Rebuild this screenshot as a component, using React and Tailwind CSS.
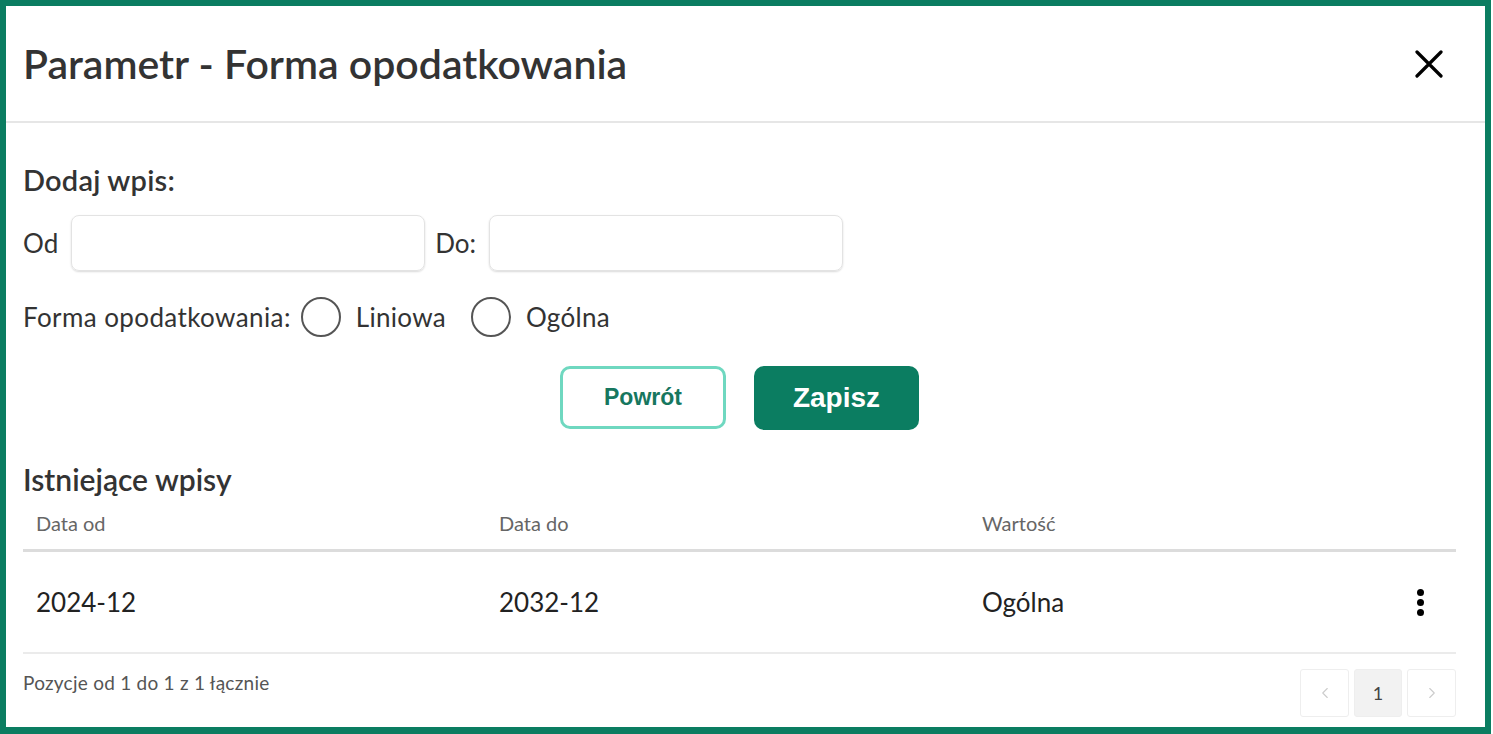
import React, { useState } from "react";
import { ChevronLeft, ChevronRight } from "lucide-react";

const rows = [{ from: "2024-12", to: "2032-12", value: "Ogólna" }];

function Radio({ label, checked, onChange }) {
  return (
    <label className="flex items-center cursor-pointer" onClick={onChange}>
      <span className="w-[40px] h-[40px] rounded-full border-2 border-[#555] flex items-center justify-center">
        {checked && <span className="w-[20px] h-[20px] rounded-full bg-[#0b7d61]" />}
      </span>
      <span className="ml-[15px] text-[26px] text-[#333] tracking-[0.3px]">{label}</span>
    </label>
  );
}

export default function App() {
  const [forma, setForma] = useState(null);

  return (
    <div
      className="w-[1491px] h-[734px] border-[6px] border-b-[7px] border-[#0b7d61] bg-white flex flex-col"
      style={{ fontFamily: "Lato, 'Noto Sans', sans-serif" }}
    >
      {/* Header */}
      <div className="h-[117px] shrink-0 flex items-center justify-between pl-[17px] pr-[42px] border-b-2 border-[#e6e6e6]">
        <h1 className="text-[41px] font-semibold text-[#333] leading-[48px]">
          Parametr - Forma opodatkowania
        </h1>
        <button className="text-black">
          <svg width="28" height="28" viewBox="0 0 28 28" fill="none" stroke="currentColor" strokeWidth="3.2" strokeLinecap="round">
            <path d="M2 2 L26 26 M26 2 L2 26" />
          </svg>
        </button>
      </div>

      {/* Body */}
      <div className="flex-1 flex flex-col pl-[17px] pr-[29px]">
        <h2 className="mt-[40px] text-[29px] font-semibold text-[#333] leading-[34px] tracking-[0.2px]">Dodaj wpis:</h2>

        <div className="mt-[18px] flex items-center">
          <span className="text-[26px] text-[#333] mr-[13px]">Od</span>
          <input className="w-[354px] h-[56px] rounded-[8px] border border-[#e3e3e3] shadow-[0_1px_2px_rgba(0,0,0,0.15)] px-3 outline-none" />
          <span className="text-[26px] text-[#333] ml-[10px] mr-[13px]">Do:</span>
          <input className="w-[354px] h-[56px] rounded-[8px] border border-[#e3e3e3] shadow-[0_1px_2px_rgba(0,0,0,0.15)] px-3 outline-none" />
        </div>

        <div className="mt-[26px] flex items-center">
          <span className="text-[26px] text-[#333] mr-[10px] tracking-[0.4px]">Forma opodatkowania:</span>
          <Radio label="Liniowa" checked={forma === "L"} onChange={() => setForma("L")} />
          <div className="w-[25px]" />
          <Radio label="Ogólna" checked={forma === "O"} onChange={() => setForma("O")} />
        </div>

        <div
          className="mt-[29px] flex justify-center gap-[28px]"
          style={{ fontFamily: "'Liberation Sans', Arial, sans-serif" }}
        >
          <button className="w-[166px] h-[63px] rounded-[10px] border-[3px] border-[#6fd8c0] text-[#17775f] text-[23px] font-bold">
            Powrót
          </button>
          <button className="w-[165px] h-[64px] rounded-[10px] bg-[#0b7d61] text-white text-[28px] font-bold">
            Zapisz
          </button>
        </div>

        <h2 className="mt-[31px] text-[30px] font-semibold text-[#333] leading-[36px]">Istniejące wpisy</h2>

        {/* Table */}
        <div className="mt-[2px]">
          <div className="flex items-center h-[53px] pb-[3px] border-b-[3px] border-[#dcdcdc] text-[20px] text-[#666]">
            <div className="w-[476px] pl-[13px]">Data od</div>
            <div className="w-[483px]">Data do</div>
            <div className="flex-1">Wartość</div>
          </div>
          {rows.map((r) => (
            <div
              key={r.from}
              className="flex items-center h-[102px] border-b-2 border-[#ebebeb] text-[26px] text-[#222]"
            >
              <div className="w-[476px] pl-[13px]">{r.from}</div>
              <div className="w-[483px]">{r.to}</div>
              <div className="flex-1">{r.value}</div>
              <button className="w-[10px] mr-[31px] flex flex-col items-center gap-[3px]">
                <span className="w-[7px] h-[7px] rounded-full bg-black" />
                <span className="w-[7px] h-[7px] rounded-full bg-black" />
                <span className="w-[7px] h-[7px] rounded-full bg-black" />
              </button>
            </div>
          ))}
        </div>

        <div className="flex justify-between items-start mt-[15px]">
          <span className="text-[19px] text-[#555] tracking-[0.25px]">Pozycje od 1 do 1 z 1 łącznie</span>
          <div className="flex gap-[5px]">
            <button className="w-[49px] h-[48px] border border-[#eeeeee] rounded-[3px] flex items-center justify-center text-[#cccccc]">
              <ChevronLeft className="w-[18px] h-[18px]" strokeWidth={1.5} />
            </button>
            <button className="w-[48px] h-[48px] border border-[#eeeeee] bg-[#f2f2f2] rounded-[3px] flex items-center justify-center text-[18px] text-[#444]">
              1
            </button>
            <button className="w-[49px] h-[48px] border border-[#eeeeee] rounded-[3px] flex items-center justify-center text-[#cccccc]">
              <ChevronRight className="w-[18px] h-[18px]" strokeWidth={1.5} />
            </button>
          </div>
        </div>
      </div>
    </div>
  );
}
